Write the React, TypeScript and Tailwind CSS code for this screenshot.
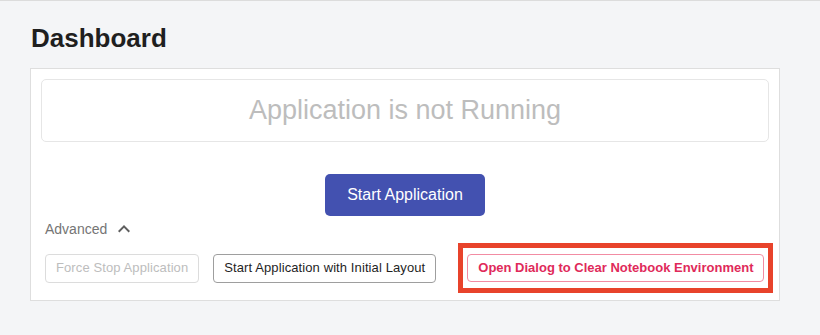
import React from "react";

function ExpandLess() {
  return (
    <svg viewBox="0 0 24 24" className="w-6 h-6 fill-[#5f5f5f]">
      <path d="M12 8l-6 6 1.41 1.41L12 10.83l4.59 4.58L18 14z" />
    </svg>
  );
}

export default function App() {
  return (
    <div
      className="min-h-screen bg-[#f4f5f7] border-t border-[#dcdcdc] pt-[21px] px-[30px]"
      style={{ fontFamily: '"Liberation Sans", Arial, sans-serif' }}
    >
      <h1 className="text-[26px] leading-[32px] font-bold text-[#1f1f1f] pl-px mb-[14px]">Dashboard</h1>

      {/* Main card */}
      <div className="w-[750px] bg-white border border-[#dedede] p-[10px] pb-[7px]">
        <div className="h-[63px] flex items-center justify-center border border-[#e6e6e6] rounded-[5px]">
          <span className="text-[27px] text-[#bdbdbd]">Application is not Running</span>
        </div>

        <div className="flex justify-center mt-[32px]">
          <button className="w-[160px] h-[42px] rounded-[5px] bg-[#4351b0] text-white text-[16px]">
            Start Application
          </button>
        </div>

        <div className="pl-1">
          <div className="flex items-center h-6 mt-px">
            <span className="text-[14px] text-[#757575]">Advanced</span>
            <span className="ml-[5px]">
              <ExpandLess />
            </span>
          </div>

          <div className="flex items-center mt-[2px] whitespace-nowrap">
            <button
              disabled
              className="shrink-0 h-[29px] px-[10px] rounded-[4px] border border-[#dcdcdc] text-[13px] text-[#bdbdbd] tracking-[0.1px]"
            >
              Force Stop Application
            </button>
            <button className="shrink-0 ml-[14px] h-[29px] px-[10px] rounded-[4px] border border-[#9e9e9e] text-[13px] text-[#1f1f1f] tracking-[0.1px]">
              Start Application with Initial Layout
            </button>
            <div className="shrink-0 ml-[22px] border-[5px] border-[#e8432b] px-1 py-[6px]">
              <button className="h-[28px] px-[10px] rounded-[4px] border border-[#f28ca3] text-[13px] font-bold text-[#e02a5a]">
                Open Dialog to Clear Notebook Environment
              </button>
            </div>
          </div>
        </div>
      </div>
    </div>
  );
}
